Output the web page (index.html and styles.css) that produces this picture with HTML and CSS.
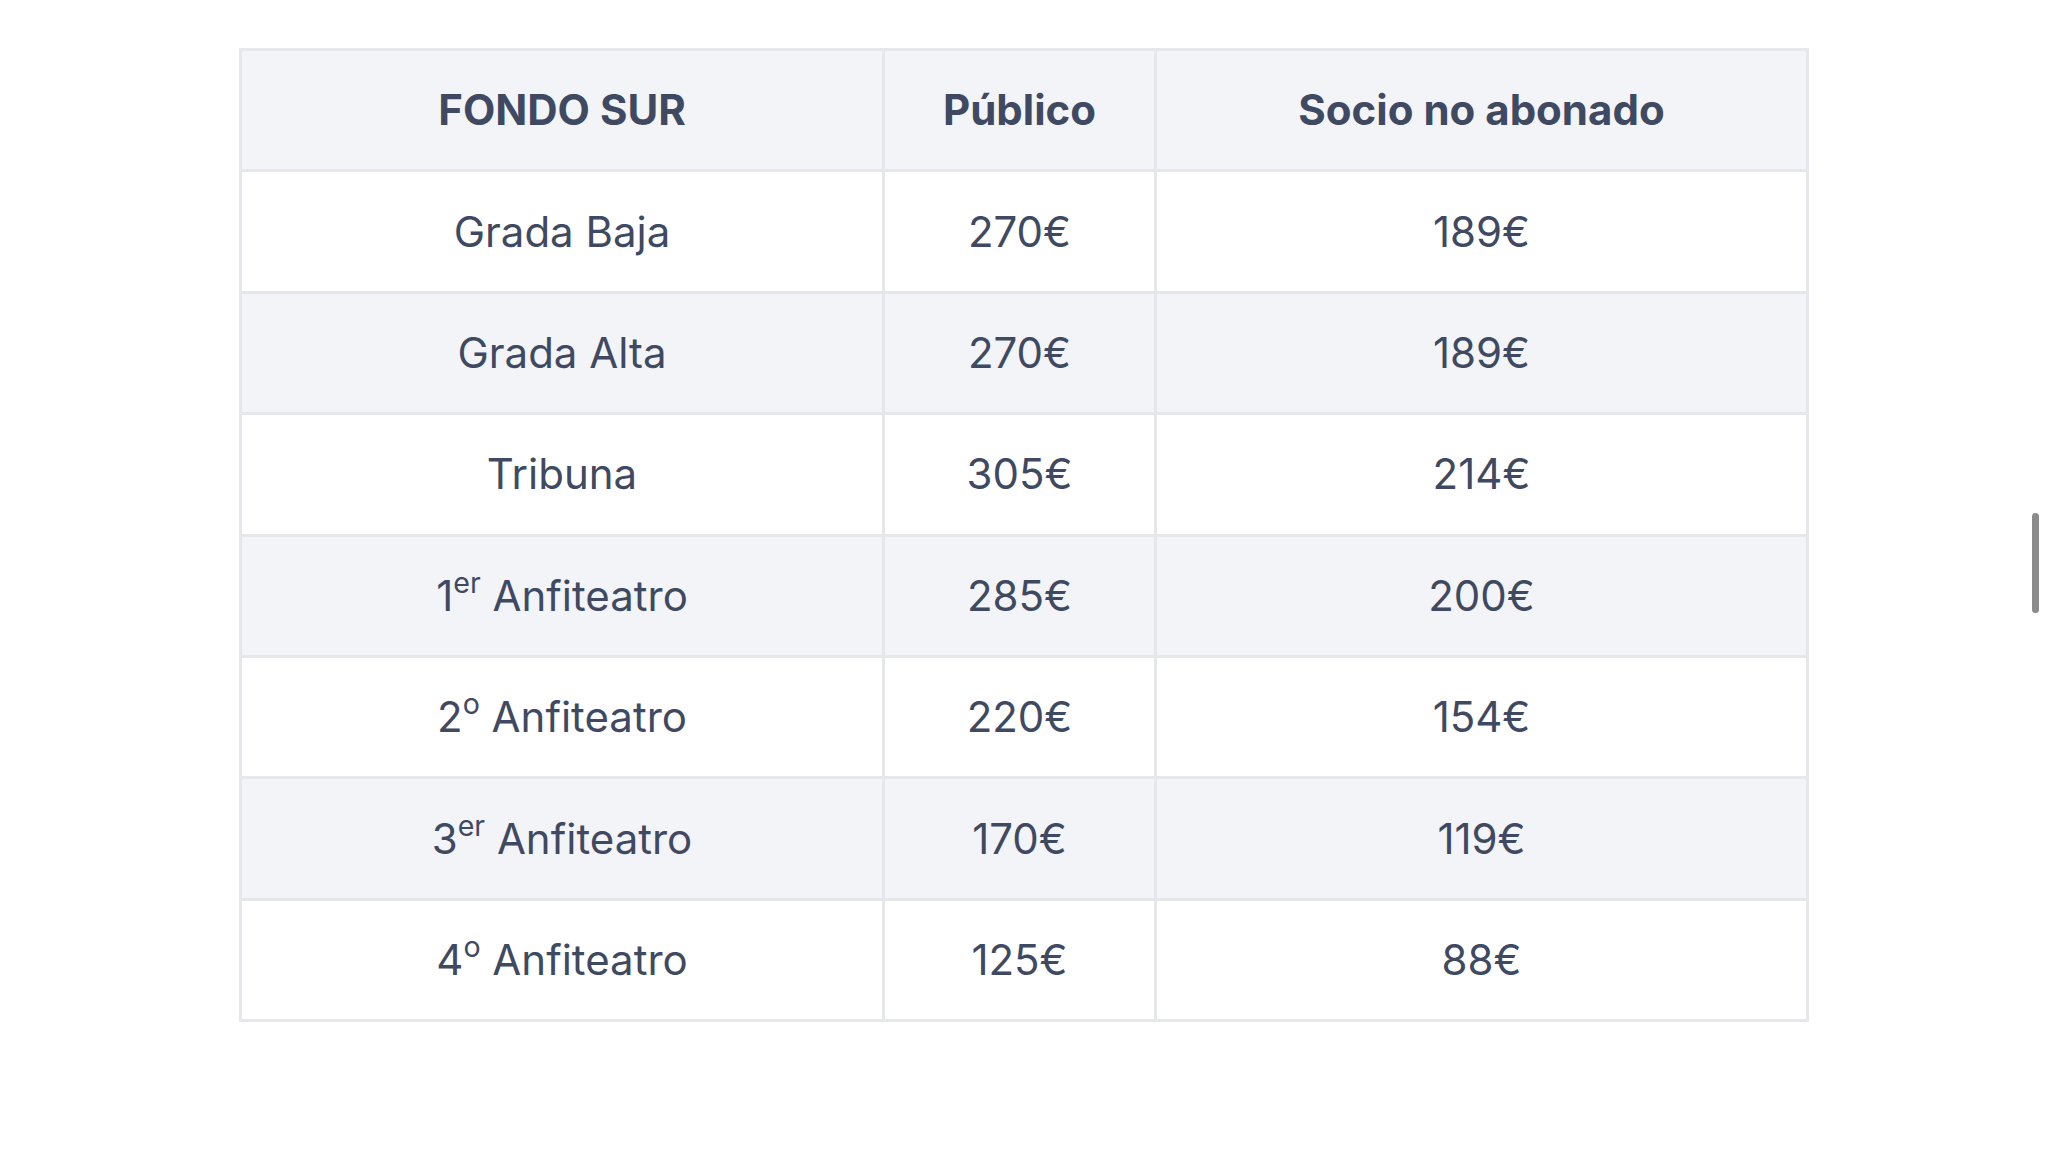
FILE: index.html
```html
<!DOCTYPE html>
<html lang="es">
<head>
<meta charset="utf-8">
<title>Fondo Sur</title>
<link rel="stylesheet" href="styles.css">
</head>
<body>
<table class="prices">
  <colgroup>
    <col class="c1"><col class="c2"><col class="c3">
  </colgroup>
  <thead>
    <tr><th>FONDO SUR</th><th>Público</th><th>Socio no abonado</th></tr>
  </thead>
  <tbody>
    <tr><td>Grada Baja</td><td>270€</td><td>189€</td></tr>
    <tr><td>Grada Alta</td><td>270€</td><td>189€</td></tr>
    <tr><td>Tribuna</td><td>305€</td><td>214€</td></tr>
    <tr><td>1<sup>er</sup> Anfiteatro</td><td>285€</td><td>200€</td></tr>
    <tr><td>2<sup>o</sup> Anfiteatro</td><td>220€</td><td>154€</td></tr>
    <tr><td>3<sup>er</sup> Anfiteatro</td><td>170€</td><td>119€</td></tr>
    <tr><td>4<sup>o</sup> Anfiteatro</td><td>125€</td><td>88€</td></tr>
  </tbody>
</table>
<div class="scrollbar"></div>
</body>
</html>
```
FILE: styles.css
```css
html, body {
  margin: 0;
  padding: 0;
  background: #ffffff;
}
body {
  font-family: Inter, "Noto Sans", "Liberation Sans", sans-serif;
  color: #3f4a62;
}
.prices {
  margin: 48px auto 0;
  width: 1570px;
  table-layout: fixed;
  border-collapse: separate;
  border-spacing: 0;
  border-top: 3px solid #e5e7eb;
  border-left: 3px solid #e5e7eb;
}
.c1 { width: 643px; }
.c2 { width: 272px; }
.c3 { width: 652px; }
.prices th,
.prices td {
  height: 118.4px;
  padding: 0;
  text-align: center;
  vertical-align: middle;
  border-right: 3px solid #e5e7eb;
  border-bottom: 3px solid #e5e7eb;
  font-size: 42px;
  line-height: 1;
}
.prices th {
  font-weight: 700;
  background: #f3f4f7;
}
.prices td {
  font-weight: 400;
}
.prices tbody tr:nth-child(even) td {
  background: #f3f4f7;
}
.prices sup {
  font-size: 0.68em;
  line-height: 0;
  vertical-align: 0.62em;
}
.scrollbar {
  position: fixed;
  left: 2032px;
  top: 513px;
  width: 7px;
  height: 100px;
  border-radius: 4px;
  background: #8b8b8b;
}
```
